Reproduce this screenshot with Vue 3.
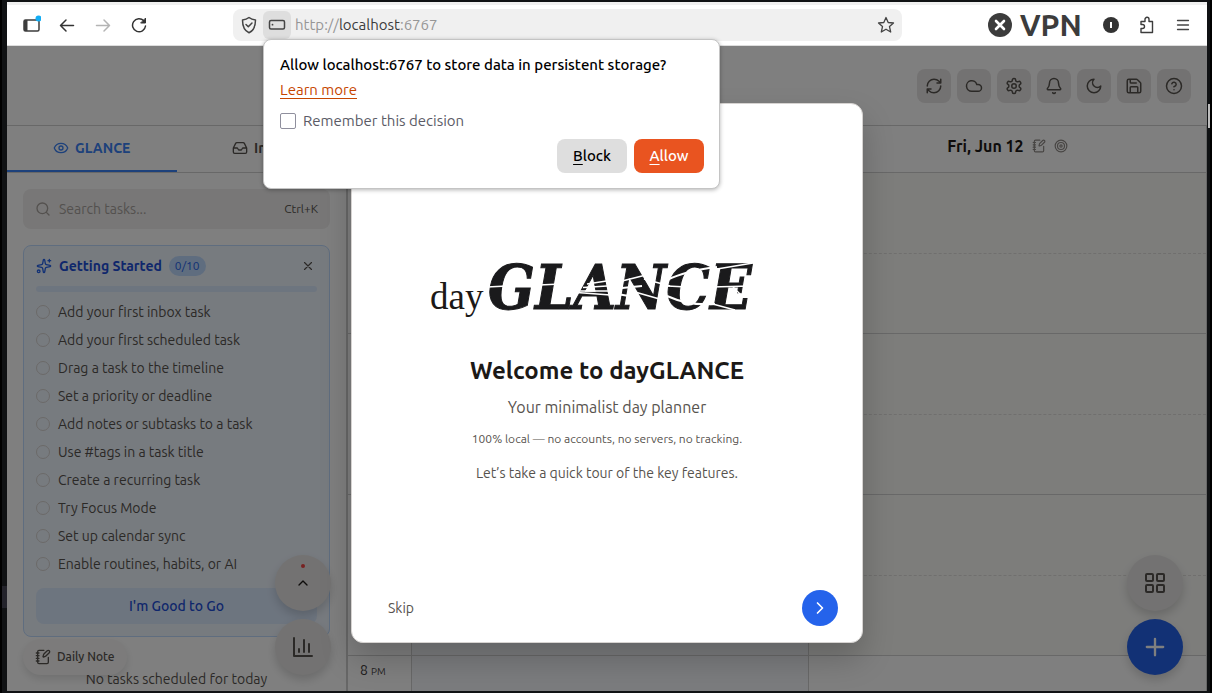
<script setup>
import { h, ref } from 'vue'

const paths = {
  eye: 'M2.06 12.35a1 1 0 0 1 0-.7 10.75 10.75 0 0 1 19.88 0 1 1 0 0 1 0 .7 10.75 10.75 0 0 1-19.88 0M9 12a3 3 0 1 0 6 0a3 3 0 1 0-6 0',
  inbox: 'M22 12h-6l-2 3h-4l-2-3H2M5.45 5.11 2 12v6a2 2 0 0 0 2 2h16a2 2 0 0 0 2-2v-6l-3.45-6.89A2 2 0 0 0 16.76 4H7.24a2 2 0 0 0-1.79 1.11z',
  refresh: 'M3 12a9 9 0 0 1 9-9 9.75 9.75 0 0 1 6.74 2.74L21 8M21 3v5h-5M21 12a9 9 0 0 1-9 9 9.75 9.75 0 0 1-6.74-2.74L3 16M8 16H3v5',
  cloud: 'M17.5 19H9a7 7 0 1 1 6.71-9h1.79a4.5 4.5 0 1 1 0 9Z',
  settings: 'M12.22 2h-.44a2 2 0 0 0-2 2v.18a2 2 0 0 1-1 1.73l-.43.25a2 2 0 0 1-2 0l-.15-.08a2 2 0 0 0-2.73.73l-.22.38a2 2 0 0 0 .73 2.73l.15.1a2 2 0 0 1 1 1.72v.51a2 2 0 0 1-1 1.74l-.15.09a2 2 0 0 0-.73 2.73l.22.38a2 2 0 0 0 2.73.73l.15-.08a2 2 0 0 1 2 0l.43.25a2 2 0 0 1 1 1.73V20a2 2 0 0 0 2 2h.44a2 2 0 0 0 2-2v-.18a2 2 0 0 1 1-1.73l.43-.25a2 2 0 0 1 2 0l.15.08a2 2 0 0 0 2.73-.73l.22-.39a2 2 0 0 0-.73-2.73l-.15-.08a2 2 0 0 1-1-1.74v-.5a2 2 0 0 1 1-1.74l.15-.09a2 2 0 0 0 .73-2.73l-.22-.38a2 2 0 0 0-2.73-.73l-.15.08a2 2 0 0 1-2 0l-.43-.25a2 2 0 0 1-1-1.73V4a2 2 0 0 0-2-2zM9 12a3 3 0 1 0 6 0a3 3 0 1 0-6 0',
  bell: 'M10.27 21a2 2 0 0 0 3.46 0M3.26 15.33A1 1 0 0 0 4 17h16a1 1 0 0 0 .74-1.67C19.41 13.96 18 12.5 18 8A6 6 0 0 0 6 8c0 4.5-1.41 5.96-2.74 7.33',
  moon: 'M12 3a6 6 0 0 0 9 9 9 9 0 1 1-9-9Z',
  save: 'M15.2 3a2 2 0 0 1 1.4.6l3.8 3.8a2 2 0 0 1 .6 1.4V19a2 2 0 0 1-2 2H5a2 2 0 0 1-2-2V5a2 2 0 0 1 2-2zM17 21v-7a1 1 0 0 0-1-1H8a1 1 0 0 0-1 1v7M7 3v4a1 1 0 0 0 1 1h7',
  help: 'M2 12a10 10 0 1 0 20 0a10 10 0 1 0-20 0M9.09 9a3 3 0 0 1 5.83 1c0 2-3 3-3 3M12 17h.01',
  note: 'M13.4 2H6a2 2 0 0 0-2 2v16a2 2 0 0 0 2 2h12a2 2 0 0 0 2-2v-7.4M2 6h4M2 10h4M2 14h4M2 18h4M21.38 5.63a1 1 0 1 0-3-3l-5.02 5a2 2 0 0 0-.5.86l-.84 2.87a.5.5 0 0 0 .62.62l2.87-.84a2 2 0 0 0 .85-.5z',
  target: 'M2 12a10 10 0 1 0 20 0a10 10 0 1 0-20 0M6 12a6 6 0 1 0 12 0a6 6 0 1 0-12 0M10 12a2 2 0 1 0 4 0a2 2 0 1 0-4 0',
  search: 'M3 11a8 8 0 1 0 16 0a8 8 0 1 0-16 0M21 21l-4.3-4.3',
  sparkles: 'M11.02 2.81a1 1 0 0 1 1.96 0l1.05 5.56a2 2 0 0 0 1.6 1.6l5.56 1.05a1 1 0 0 1 0 1.96l-5.56 1.05a2 2 0 0 0-1.6 1.6l-1.05 5.56a1 1 0 0 1-1.96 0l-1.05-5.56a2 2 0 0 0-1.6-1.6l-5.56-1.05a1 1 0 0 1 0-1.96l5.56-1.05a2 2 0 0 0 1.6-1.6zM20 2v4M22 4h-4M2 20a2 2 0 1 0 4 0a2 2 0 1 0-4 0',
  close: 'M18 6 6 18M6 6l12 12',
  up: 'm18 15-6-6-6 6',
  right: 'm9 18 6-6-6-6',
  plus: 'M5 12h14M12 5v14',
  chart: 'M3 3v18h18M18 17V9M13 17V5M8 17v-3',
  grid: 'M4 3h5a1 1 0 0 1 1 1v5a1 1 0 0 1-1 1H4a1 1 0 0 1-1-1V4a1 1 0 0 1 1-1zM15 3h5a1 1 0 0 1 1 1v5a1 1 0 0 1-1 1h-5a1 1 0 0 1-1-1V4a1 1 0 0 1 1-1zM15 14h5a1 1 0 0 1 1 1v5a1 1 0 0 1-1 1h-5a1 1 0 0 1-1-1v-5a1 1 0 0 1 1-1zM4 14h5a1 1 0 0 1 1 1v5a1 1 0 0 1-1 1H4a1 1 0 0 1-1-1v-5a1 1 0 0 1 1-1z'
}

const Icon = (props) =>
  h('svg', {
    width: props.size, height: props.size, viewBox: '0 0 24 24', fill: 'none',
    stroke: 'currentColor', 'stroke-width': 2, 'stroke-linecap': 'round',
    'stroke-linejoin': 'round', 'aria-hidden': 'true'
  }, [h('path', { d: paths[props.name] })])
Icon.props = ['name', 'size']

const tools = [
  ['refresh', 'Sync'], ['cloud', 'Cloud'], ['settings', 'Settings'], ['bell', 'Reminders'],
  ['moon', 'Dark mode'], ['save', 'Backup'], ['help', 'Help']
]
const steps = [
  'Add your first inbox task', 'Add your first scheduled task', 'Drag a task to the timeline',
  'Set a priority or deadline', 'Add notes or subtasks to a task', 'Use #tags in a task title',
  'Create a recurring task', 'Try Focus Mode', 'Set up calendar sync', 'Enable routines, habits, or AI'
]
const hours = [5, 6, 7, 8]
const remember = ref(false)
const query = ref('')
</script>

<template>
  <div class="desktop">
    <div class="window">
      <div class="strip"></div>
      <nav class="toolbar" aria-label="Browser toolbar">
        <button class="nav" aria-label="Sidebar">
          <svg width="20" height="20" viewBox="0 0 20 20" fill="none">
            <rect x="3" y="5" width="15" height="11" rx="1.5" stroke="#3c3c3c" stroke-width="1.5" />
            <path d="M3 5h3.500v11H3z" fill="#3c3c3c" />
            <circle cx="17.500" cy="3.500" r="3" fill="#12adf5" />
          </svg>
        </button>
        <button class="nav" aria-label="Back">
          <svg width="16" height="16" viewBox="0 0 16 16" fill="none" stroke="#333" stroke-width="1.500" stroke-linecap="round" stroke-linejoin="round"><path d="M14.500 8.500h-13M7 3 1.500 8.500 7 14" /></svg>
        </button>
        <button class="nav" aria-label="Forward">
          <svg width="16" height="16" viewBox="0 0 16 16" fill="none" stroke="#b4b4b4" stroke-width="1.500" stroke-linecap="round" stroke-linejoin="round"><path d="M1.500 8.500h13M9 3l5.500 5.500L9 14" /></svg>
        </button>
        <button class="nav" aria-label="Reload">
          <svg width="16" height="16" viewBox="0 0 16 16" fill="none" stroke="#333" stroke-width="1.500" stroke-linecap="round" stroke-linejoin="round"><path d="M14.500 9A6.500 6.500 0 1 1 12.800 3.800L14 5" /><path d="M14.500 1.500V6H10z" fill="#333" stroke-width="1" /></svg>
        </button>
        <div class="urlbar">
          <svg class="shield" width="18" height="18" viewBox="0 0 18 18" fill="none" stroke="#444" stroke-width="1.500" stroke-linecap="round" stroke-linejoin="round"><path d="M9 1.500c2 1.700 4.200 2.300 6.500 2.500 0 6-1.500 10.500-6.500 12.800C4 14.500 2.500 10 2.500 4 4.800 3.800 7 3.200 9 1.500z" /><path d="m6 8.500 2.300 2.300L12 7" /></svg>
          <div class="site">
            <button class="storage" aria-label="Storage permission">
              <svg width="18" height="12" viewBox="0 0 18 12" fill="none"><rect x="1.500" y="1.500" width="15" height="8.500" rx="1.500" stroke="#444" stroke-width="1.500" /><circle cx="4.500" cy="5.700" r="0.900" fill="#444" /></svg>
            </button>
            <section class="prompt" role="dialog" aria-label="Storage request">
              <strong>Allow localhost:6767 to store data in persistent storage?</strong>
              <a href="#learn">Learn more</a>
              <label class="remember"><input v-model="remember" type="checkbox" /><span>Remember this decision</span></label>
              <div class="choices">
                <button class="block"><u>B</u>lock</button>
                <button class="allow"><u>A</u>llow</button>
              </div>
            </section>
          </div>
          <div class="url">http://<b>localhost</b>:6767</div>
          <svg class="star" width="18" height="18" viewBox="0 0 18 18" fill="none" stroke="#444" stroke-width="1.300" stroke-linejoin="round"><path d="m9 1.500 2.200 5 5.300.5-4 3.600 1.200 5.400L9 13.200 4.300 16l1.200-5.400-4-3.600 5.300-.5z" /></svg>
        </div>
        <button class="vpn">
          <svg width="24" height="24" viewBox="0 0 24 24"><circle cx="12" cy="12" r="12" fill="#3c3c3c" /><path d="m8 8 8 8M16 8l-8 8" stroke="#fff" stroke-width="2.600" stroke-linecap="round" /></svg>
          <span>VPN</span>
        </button>
        <button class="nav" aria-label="Password extension">
          <svg width="16" height="16" viewBox="0 0 16 16"><circle cx="8" cy="8" r="8" fill="#333" /><path d="M8 5v6" stroke="#fff" stroke-width="2" /></svg>
        </button>
        <button class="nav" aria-label="Extensions">
          <svg width="16" height="18" viewBox="0 0 16 18" fill="none" stroke="#3c3c3c" stroke-width="1.400" stroke-linejoin="round"><path d="M2 16.500v-4h1.500a2 2 0 0 0 0-4H2V5.500h4V3.300a2 2 0 0 1 4 0v2.200h3.500v11z" /></svg>
        </button>
        <button class="nav" aria-label="Menu">
          <svg width="16" height="16" viewBox="0 0 16 16" stroke="#444" stroke-width="1.300" stroke-linecap="round"><path d="M2.500 3.500h11M2.500 8h11M2.500 12.500h11" /></svg>
        </button>
      </nav>

      <div class="page">
        <header class="top">
          <button v-for="[icon, label] in tools" :key="icon" :aria-label="label"><Icon :name="icon" :size="18" /></button>
        </header>
        <div class="body">
          <aside class="sidebar">
            <div class="tabs">
              <button class="active"><Icon name="eye" :size="16" />GLANCE</button>
              <button><Icon name="inbox" :size="16" />Inbox</button>
            </div>
            <div class="side">
              <label class="search">
                <Icon name="search" :size="16" />
                <input v-model="query" type="text" placeholder="Search tasks..." aria-label="Search tasks" />
                <kbd>Ctrl+K</kbd>
              </label>
              <section class="card">
                <div class="cardhead">
                  <Icon name="sparkles" :size="16" />
                  <h2>Getting Started</h2>
                  <span class="badge">0/10</span>
                  <button aria-label="Dismiss"><Icon name="close" :size="14" /></button>
                </div>
                <div class="bar"></div>
                <ul>
                  <li v-for="s in steps" :key="s"><i></i>{{ s }}</li>
                </ul>
                <button class="good">I'm Good to Go</button>
              </section>
              <p class="empty">No tasks scheduled for today</p>
            </div>
          </aside>
          <main class="calendar">
            <div class="days">
              <div></div>
              <div></div>
              <div class="day">Fri, Jun 12<Icon name="note" :size="14" /><Icon name="target" :size="14" /></div>
            </div>
            <div v-for="hour in hours" :key="hour" class="hour" :class="{ late: hour === 8 }">
              <div class="time">{{ hour }} <small>PM</small></div>
              <div class="slot today"></div>
              <div class="slot"></div>
            </div>
          </main>
        </div>

        <button class="daily"><Icon name="note" :size="16" />Daily Note</button>
        <div class="stack left">
          <button class="round" aria-label="Expand"><em></em><Icon name="up" :size="16" /></button>
          <button class="round" aria-label="Statistics"><Icon name="chart" :size="24" /></button>
        </div>
        <div class="stack right">
          <button class="round" aria-label="Views"><Icon name="grid" :size="24" /></button>
          <button class="round add" aria-label="Add task"><Icon name="plus" :size="28" /></button>
        </div>

        <div class="overlay">
          <section class="modal" role="dialog" aria-label="Welcome">
            <div class="intro">
              <svg class="logo" width="360" height="64" viewBox="0 0 360 64" role="img" aria-label="dayGLANCE">
                <text x="3" y="53" class="thin">day</text>
                <text x="61" y="53" class="heavy">GLANCE</text>
                <g stroke="#fff" fill="none">
                  <path d="m60 31 20-1M112 29l22-1" stroke-width="1.400" />
                  <path d="m160 28 26-4M156 31.500l32-2M150 35l42 0M150 36.500l40 3" stroke-width="1.400" />
                  <path d="m195 25 24-6M195 32l20-2M193 38.500l18 3M208 36l28 8M217 23l26 7" stroke-width="1.800" />
                  <path d="M240 24q18-9 50-13M240 40q22 10 48 8" stroke-width="2" />
                  <path d="m240 30 20 1M284 31l40-1M284 14l42-7M282 47l26 7M306 31l8 8" stroke-width="1.400" />
                </g>
              </svg>
              <h1>Welcome to dayGLANCE</h1>
              <p class="lead">Your minimalist day planner</p>
              <p class="local">100% local — no accounts, no servers, no tracking.</p>
              <p class="tour">Let’s take a quick tour of the key features.</p>
            </div>
            <footer>
              <button class="skip">Skip</button>
              <button class="next" aria-label="Next"><Icon name="right" :size="20" /></button>
            </footer>
          </section>
        </div>
      </div>
    </div>
  </div>
</template>

<style>
body { background: #000; }
</style>

<style scoped>
* { box-sizing: border-box; }
.desktop {
  height: 100vh; padding: 2px 5px 2px 7px; overflow: hidden; color: #44403c;
  font-family: Ubuntu, "Noto Sans", sans-serif; font-size: 14px; line-height: 20px;
  background:
    linear-gradient(#000, #000) left / 2px 100% no-repeat,
    linear-gradient(#23232b, #23232b) 2px 586px / 5px 22px no-repeat,
    linear-gradient(#000, #000) right / 2px 100% no-repeat,
    linear-gradient(#bdbdbd, #bdbdbd) 100% 104px / 4px 24px no-repeat,
    #101214;
}
button { border: 0; padding: 0; margin: 0; background: none; color: inherit; font: inherit; display: flex; align-items: center; justify-content: center; }
svg { flex: none; display: block; }
.window { height: 100%; display: flex; flex-direction: column; background: #fff; }
.strip { flex: none; height: 3px; background: #f0f0f0; }
.toolbar { flex: none; height: 41px; display: flex; align-items: center; padding: 0 6px; border-bottom: 1px solid #ddd; background: #fff; }
.nav { width: 36px; height: 32px; flex: none; }
.urlbar { flex: 1; min-width: 0; margin-left: 76px; height: 32px; padding: 0 7px; display: flex; align-items: center; border-radius: 8px; background: #f0f0f0; font-size: 15px; }
.site { position: relative; margin: 0 4px 0 5px; }
.storage { width: 28px; height: 28px; border-radius: 6px; background: #dedede; }
.url { flex: 1; color: #969696; }
.url b { font-weight: 400; color: #3c3c3c; }
.vpn { gap: 8px; margin: 0 11px 0 86px; color: #3c3c3c; font-size: 30px; font-weight: 600; line-height: 36px; }
.prompt {
  position: absolute; z-index: 5; top: 28px; left: 0; width: 457px; padding: 15px 15px 15px 16px; display: flex; flex-direction: column; align-items: flex-start;
  border: 1px solid #c4c4c4; border-radius: 8px; background: #fff; box-shadow: 0 1px 4px rgba(0, 0, 0, .3); font-size: 15px; color: #5b5b66;
}
.prompt strong { font-weight: 500; color: #000; }
.prompt a { margin-top: 5px; color: #c64600; text-underline-offset: 3px; }
.remember { display: flex; align-items: center; gap: 7px; margin-top: 11px; }
.remember input { appearance: none; width: 16px; height: 16px; margin: 0; border: 1px solid #8f8f9d; border-radius: 2px; background: #fff; }
.choices { align-self: flex-end; display: flex; gap: 7px; margin-top: 8px; }
.choices button { display: block; width: 70px; height: 34px; border-radius: 8px; font-weight: 500; background: #dedede; color: #000; }
.choices .allow { background: #e95420; color: #fff; }
.choices u { text-underline-offset: 3px; }

.page { position: relative; flex: 1; min-height: 0; overflow: hidden; display: flex; flex-direction: column; background: #fff; }
.top { flex: none; height: 80px; padding: 0 16px; display: flex; align-items: center; justify-content: flex-end; gap: 6px; border-bottom: 1px solid #d0d0d0; }
.top button { width: 34px; height: 34px; border-radius: 8px; background: #e7e5e4; color: #57534e; }
.body { flex: 1; min-height: 0; display: flex; }
.sidebar { flex: none; width: 341px; border-right: 2px solid #cfcfcf; }
.tabs { display: flex; height: 47px; border-bottom: 1px solid #d0d0d0; }
.tabs button { flex: 1; gap: 6px; height: 46px; border-bottom: 2px solid transparent; font-weight: 700; color: #57534e; }
.tabs .active { color: #3b82f6; border-color: #3b82f6; }
.side { padding: 16px; }
.search { display: flex; align-items: center; gap: 8px; height: 40px; padding: 0 12px; border-radius: 8px; background: #f0efee; color: #a8a29e; }
.search input { flex: 1; min-width: 0; padding: 0; border: 0; outline: 0; background: none; font: inherit; color: #57534e; }
.search input::placeholder { color: #a8a29e; opacity: 1; }
.search kbd { font: inherit; font-size: 12px; color: #57534e; }
.card { margin-top: 16px; padding: 10px 12px 12px; border: 1px solid #bfdbfe; border-radius: 8px; background: #eff6ff; }
.cardhead { display: flex; align-items: center; gap: 7px; height: 20px; color: #2563eb; }
.cardhead h2 { margin: 0; font-size: 14px; line-height: 20px; font-weight: 700; color: #1d4ed8; }
.badge { padding: 0 6px; border-radius: 10px; background: #bfdbfe; font-size: 12px; line-height: 20px; }
.cardhead button { margin-left: auto; width: 18px; height: 18px; color: #57534e; }
.bar { height: 6px; margin: 10px 0 6px; border-radius: 3px; background: #dbeafe; }
ul { margin: 0; padding: 0; list-style: none; }
li { display: flex; align-items: center; gap: 8px; height: 28px; color: #57534e; }
li i { width: 14px; height: 14px; border: 1px solid #d6d3d1; border-radius: 50%; }
.good { width: 100%; height: 36px; margin-top: 10px; border-radius: 8px; background: #dbeafe; color: #1d4ed8; font-weight: 500; }
.empty { margin: 32px 0 0; text-align: center; color: #57534e; }

.calendar { flex: 1; min-width: 0; }
.days, .hour { display: grid; grid-template-columns: 64px 1fr 1fr; border-right: 1px solid #d0d0d0; }
.days { height: 47px; border-bottom: 1px solid #d0d0d0; }
.day { display: flex; align-items: center; justify-content: center; gap: 8px; padding-bottom: 6px; font-size: 16px; font-weight: 600; color: #1c1917; }
.day svg { color: #8f8a86; }
.hour { height: 161px; border-bottom: 1px solid #d0d0d0; }
.time { padding: 4px 12px; border-right: 1px solid #d0d0d0; }
.time small { font-size: 10px; }
.slot { background: #fafaf7; border-right: 1px solid #d0d0d0; }
.slot:last-child { border-right: 0; }
.slot::before { content: ""; display: block; height: 80px; border-bottom: 1px dashed #e0dfdc; }
.slot.today { background: #f6f8fd; }
.late .slot:last-child { background: #fff; }

.daily { position: absolute; left: 16px; bottom: 16px; height: 36px; padding: 0 12px; gap: 6px; border-radius: 18px; background: #f8f7f6; box-shadow: 0 4px 8px rgba(0, 0, 0, .12); font-size: 12px; font-weight: 500; color: #57534e; }
.stack { position: absolute; bottom: 16px; display: grid; gap: 8px; }
.left { left: 268px; }
.right { right: 24px; }
.round { position: relative; width: 56px; height: 56px; border-radius: 50%; background: #e7e5e4; color: #57534e; box-shadow: 0 5px 10px rgba(0, 0, 0, .16); }
.left .round:first-child { color: #1c1917; }
.round em { position: absolute; top: 9px; left: 26px; width: 4px; height: 4px; border-radius: 50%; background: #ef4444; }
.add { background: #2563eb; color: #fff; }

.overlay { position: absolute; inset: 0; display: flex; align-items: center; justify-content: center; padding-top: 8px; background: rgba(0, 0, 0, .5); }
.modal { width: 512px; height: 540px; max-width: 100%; display: flex; flex-direction: column; border: 1px solid #d6d3d1; border-radius: 12px; background: #fff; box-shadow: 0 16px 32px rgba(0, 0, 0, .2); text-align: center; color: #57534e; }
.intro { flex: 1; padding-top: 152px; display: flex; flex-direction: column; align-items: center; }
.logo { overflow: visible; }
.thin { font: 37px "Liberation Serif", serif; fill: #1c1917; }
.heavy { font: italic bold 61px "DejaVu Serif Condensed", "DejaVu Serif", serif; fill: #1a1a1c; stroke: #1a1a1c; stroke-width: 1px; }
h1 { margin: 35px 0 0; font-size: 24px; line-height: 32px; font-weight: 600; color: #1c1917; }
p { margin: 0; }
.lead { margin-top: 8px; font-size: 16px; line-height: 24px; }
.local { margin-top: 12px; font-size: 12px; line-height: 16px; color: #57534e; }
.tour { margin-top: 16px; }
footer { display: flex; align-items: center; justify-content: space-between; padding: 16px 24px; }
.skip { padding: 8px 12px; }
.next { width: 36px; height: 36px; border-radius: 50%; background: #2563eb; color: #fff; }
</style>
